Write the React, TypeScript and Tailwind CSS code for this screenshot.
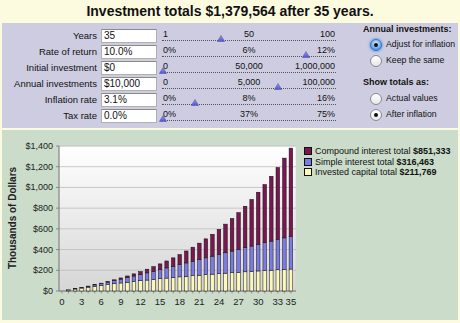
import React from 'react';

type Row = {
  label: string;
  value: string;
  marks: [string, string, string];
  pos: number;
};

const rows: Row[] = [
  { label: 'Years', value: '35', marks: ['1', '50', '100'], pos: 59 },
  { label: 'Rate of return', value: '10.0%', marks: ['0%', '6%', '12%'], pos: 144 },
  { label: 'Initial investment', value: '$0', marks: ['0', '50,000', '1,000,000'], pos: 1 },
  { label: 'Annual investments', value: '$10,000', marks: ['0', '5,000', '100,000'], pos: 116 },
  { label: 'Inflation rate', value: '3.1%', marks: ['0%', '8%', '16%'], pos: 33 },
  { label: 'Tax rate', value: '0.0%', marks: ['0%', '37%', '75%'], pos: 1 },
];

// yearly totals in today's dollars
function buildSeries() {
  const out: { cap: number; simple: number; total: number }[] = [{ cap: 0, simple: 0, total: 0 }];
  let bal = 0;
  const contribs: number[] = [];
  for (let t = 1; t <= 35; t++) {
    const c = 10000 * Math.pow(1.031, t - 1);
    contribs.push(c);
    bal = (bal + c) * 1.1;
    let cap = 0;
    let simple = 0;
    contribs.forEach((v, i) => {
      cap += v;
      simple += v + v * 0.1 * (t - i);
    });
    const d = Math.pow(1.031, t);
    out.push({ cap: cap / d, simple: simple / d, total: bal / d });
  }
  return out;
}

const series = buildSeries();

function Slider({ marks, pos }: { marks: [string, string, string]; pos: number }) {
  return (
    <div className="relative w-[174px] h-[16px] ml-[5px]">
      <div className="absolute left-0 right-0 top-[1px] flex justify-between text-[9px] leading-[10px] text-[#111] px-[1px]">
        <span className="w-[50px]">{marks[0]}</span>
        <span className="w-[50px] text-center">{marks[1]}</span>
        <span className="w-[50px] text-right">{marks[2]}</span>
      </div>
      <div className="absolute left-0 right-0 top-[12px] border-b border-dotted border-[#555]" />
      <svg className="absolute top-[7px]" style={{ left: pos - 4 }} width="8" height="7" viewBox="0 0 8 7">
        <defs>
          <linearGradient id="tri" x1="0" y1="0" x2="0" y2="1">
            <stop offset="0" stopColor="#9c9cf0" />
            <stop offset="1" stopColor="#5252c8" />
          </linearGradient>
        </defs>
        <polygon points="4,0.5 7.6,6.5 0.4,6.5" fill="url(#tri)" stroke="#4848b0" strokeWidth="0.5" />
      </svg>
    </div>
  );
}

function Radio({ label, checked, focus }: { label: string; checked?: boolean; focus?: boolean }) {
  return (
    <div className="flex items-center h-[16px] pl-[7px] whitespace-nowrap">
      <span
        className={
          'w-[12px] h-[12px] shrink-0 rounded-full border flex items-center justify-center ' +
          (focus
            ? 'border-[#3a6fb8] bg-[radial-gradient(circle_at_50%_35%,#d8ecff,#5c9ee8_70%,#2d6fc4)] shadow-[0_0_2px_1px_#7aa8e8]'
            : 'border-[#8a8a8a] bg-[linear-gradient(#ffffff,#e8e8e8)]')
        }
      >
        {checked && <span className="w-[4px] h-[4px] rounded-full bg-[#111]" />}
      </span>
      <span className="ml-[4px] text-[8.7px] text-[#111]">{label}</span>
    </div>
  );
}

function Chart() {
  const x0 = 57;
  const x1 = 294;
  const yTop = 16;
  const yBot = 161;
  const k = (yBot - yTop) / 1400000;
  const bx = (t: number) => 60 + 6.54 * t;
  const grid = [0, 200, 400, 600, 800, 1000, 1200, 1400];
  const xl = [0, 3, 6, 9, 12, 15, 18, 21, 24, 27, 30, 33, 35];
  return (
    <svg width="302" height="190" viewBox="0 0 302 190" className="shrink-0">
      <defs>
        <linearGradient id="plotbg" x1="0" y1="0" x2="0" y2="1">
          <stop offset="0" stopColor="#ffffff" />
          <stop offset="1" stopColor="#d6d6d6" />
        </linearGradient>
      </defs>
      <rect x={x0} y={yTop} width={x1 - x0} height={yBot - yTop} fill="url(#plotbg)" stroke="#d0d0d0" strokeWidth="0.5" />
      {grid.map((g) => {
        const y = yBot - g * 1000 * k;
        return (
          <g key={g}>
            <line x1={x0} x2={x1} y1={y} y2={y} stroke="#bdbdbd" strokeWidth="0.8" />
            <line x1={x0 - 3} x2={x0} y1={y} y2={y} stroke="#777" strokeWidth="0.8" />
            <text x={x0 - 6} y={y + 3} textAnchor="end" fontSize="9" fill="#222" fontFamily="Liberation Sans, Arial, sans-serif">
              {'$' + g.toLocaleString('en-US')}
            </text>
          </g>
        );
      })}
      <line x1={x0} x2={x0} y1={yTop} y2={yBot} stroke="#777" strokeWidth="1" />
      <line x1={x0} x2={x1} y1={yBot} y2={yBot} stroke="#777" strokeWidth="1" />
      {series.map((_, t) => (
        <line key={'tk' + t} x1={bx(t)} x2={bx(t)} y1={yBot} y2={yBot + 2.5} stroke="#777" strokeWidth="0.7" />
      ))}
      {series.map((s, t) => {
        if (t === 0) return null;
        const x = bx(t) - 1.8;
        const hc = s.cap * k;
        const hs = (s.simple - s.cap) * k;
        const ht = (s.total - s.simple) * k;
        return (
          <g key={t} stroke="#111" strokeWidth="0.5">
            <rect x={x} y={yBot - hc} width="3.6" height={hc} fill="#fbf8b8" />
            <rect x={x} y={yBot - hc - hs} width="3.6" height={hs} fill="#7b7be6" />
            <rect x={x} y={yBot - hc - hs - ht} width="3.6" height={ht} fill="#7a1750" />
          </g>
        );
      })}
      {xl.map((v) => (
        <text key={v} x={bx(v)} y={175} textAnchor="middle" fontSize="9.5" fill="#222" fontFamily="Liberation Sans, Arial, sans-serif">
          {v}
        </text>
      ))}
      <text
        transform="translate(14 88) rotate(-90)"
        textAnchor="middle"
        fontSize="10"
        fontWeight="bold"
        fill="#222"
        fontFamily="Liberation Sans, Arial, sans-serif"
      >
        Thousands of Dollars
      </text>
    </svg>
  );
}

function Legend() {
  const items = [
    { color: 'bg-[#7a1750]', text: 'Compound interest total ', amount: '$851,333' },
    { color: 'bg-[#7b7be6]', text: 'Simple interest total ', amount: '$316,463' },
    { color: 'bg-[#fbf8b8]', text: 'Invested capital total ', amount: '$211,769' },
  ];
  return (
    <div className="pt-[16px] flex flex-col">
      {items.map((it) => (
        <div key={it.amount} className="flex items-center h-[10.5px]">
          <span className={'w-[8px] h-[8px] shrink-0 border border-[#111] ' + it.color} />
          <span className="ml-[3px] text-[9px] leading-[10px] text-[#111] whitespace-nowrap">
            {it.text}
            <b>{it.amount}</b>
          </span>
        </div>
      ))}
    </div>
  );
}

export default function App() {
  return (
    <div className="w-[460px] h-[323px] bg-[#fcfadf] font-['Liberation_Sans',Arial,sans-serif] overflow-hidden">
      <div className="h-[23px] flex items-center justify-center text-[14px] font-bold text-[#111]">
        Investment totals $1,379,564 after 35 years.
      </div>
      <div className="mx-[2px] h-[105px] bg-[#cdcce0] flex pt-[5px]">
        <div className="flex flex-col shrink-0">
          {rows.map((r) => (
            <div key={r.label} className="flex items-start h-[16px]">
              <div className="w-[95px] text-right text-[9.5px] leading-[16px] text-[#111] whitespace-nowrap">{r.label}</div>
              <div className="ml-[4px] mt-[1px] w-[56px] h-[14px] bg-white border border-[#b0b0b0] border-t-[#8a8a8a] text-[10px] leading-[12px] pl-[2px] text-[#111]">
                {r.value}
              </div>
              <Slider marks={r.marks} pos={r.pos} />
            </div>
          ))}
        </div>
        <div className="ml-[27px] -mt-[5px] flex flex-col shrink-0">
          <div className="h-[12px] text-[9px] font-bold leading-[12px] text-[#111] whitespace-nowrap">Annual investments:</div>
          <div className="mt-[2px]">
            <Radio label="Adjust for inflation" checked focus />
            <Radio label="Keep the same" />
          </div>
          <div className="mt-[7px] h-[12px] text-[9px] font-bold leading-[12px] text-[#111] whitespace-nowrap">Show totals as:</div>
          <div className="mt-[3px]">
            <Radio label="Actual values" />
            <Radio label="After inflation" checked />
          </div>
        </div>
      </div>
      <div className="mx-[2px] mt-[2px] h-[190px] bg-[#cbdccb] flex">
        <Chart />
        <Legend />
      </div>
    </div>
  );
}
